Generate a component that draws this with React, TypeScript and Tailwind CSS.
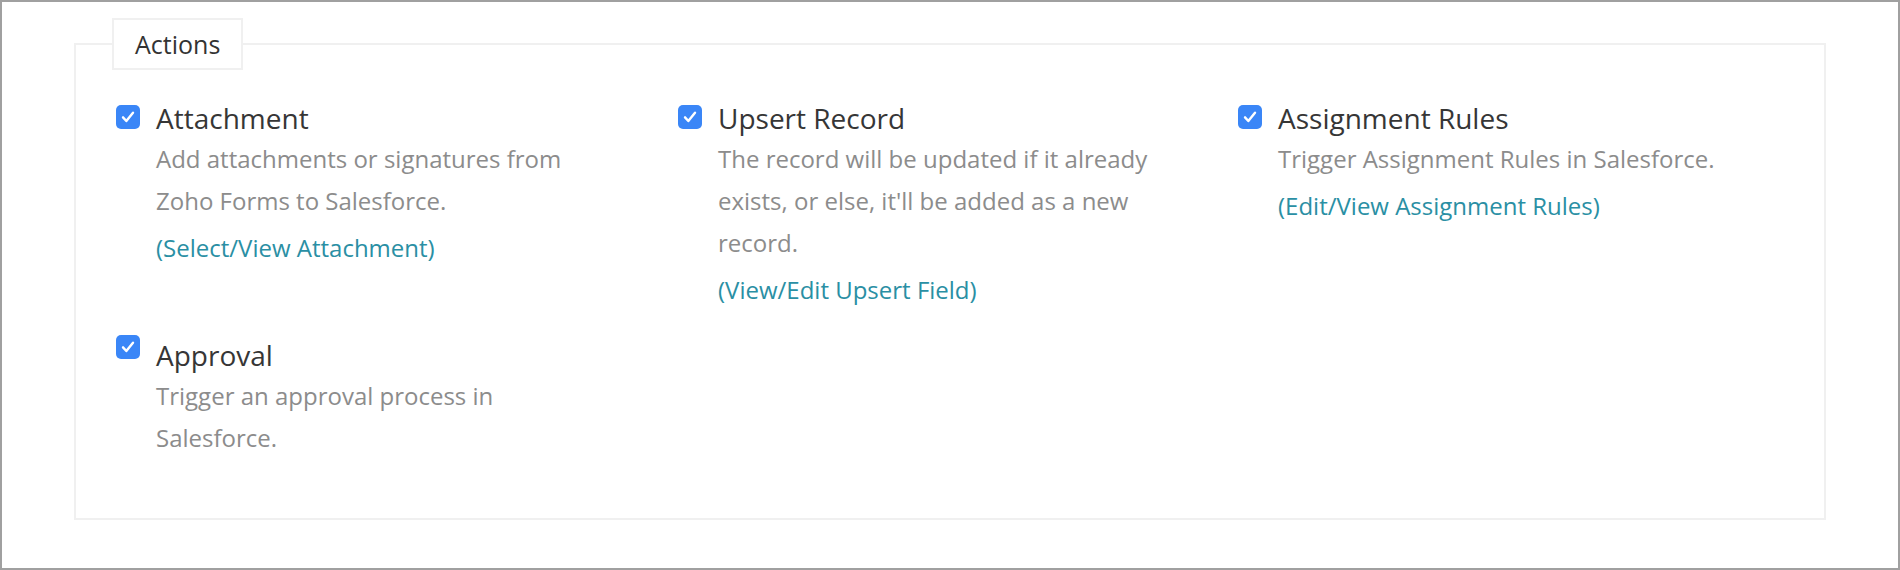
import React from 'react';

type Action = {
  title: string;
  desc: string;
  link?: string;
  boxTop: string;
};

const actions: Action[] = [
  {
    title: 'Attachment',
    desc: 'Add attachments or signatures from Zoho Forms to Salesforce.',
    link: '(Select/View Attachment)',
    boxTop: 'mt-[7px]',
  },
  {
    title: 'Upsert Record',
    desc: "The record will be updated if it already exists, or else, it'll be added as a new record.",
    link: '(View/Edit Upsert Field)',
    boxTop: 'mt-[7px]',
  },
  {
    title: 'Assignment Rules',
    desc: 'Trigger Assignment Rules in Salesforce.',
    link: '(Edit/View Assignment Rules)',
    boxTop: 'mt-[7px]',
  },
  {
    title: 'Approval',
    desc: 'Trigger an approval process in Salesforce.',
    boxTop: 'mt-0',
  },
];

function CheckBox({ className }: { className: string }) {
  return (
    <span className={`flex h-[24px] w-[24px] shrink-0 items-center justify-center rounded-[5px] bg-[#3a86f7] ${className}`}>
      <svg width="16" height="16" viewBox="0 0 24 24" fill="none" stroke="white" strokeWidth="3.6" strokeLinecap="round" strokeLinejoin="round">
        <path d="M4.5 12.5l5 5.5L19.5 5.5" />
      </svg>
    </span>
  );
}

export default function App() {
  return (
    <div className="h-[570px] w-full border-2 border-[#a0a0a0] bg-white font-['Open_Sans',sans-serif]">
      <fieldset className="ml-[72px] mt-[16px] h-[502px] w-[1752px] border-2 border-[#f0f0f0] pl-[36px] pt-[28px]">
        <legend className="h-[52px] border-2 border-[#f0f0f0] px-[21px] text-[25px] leading-[48px] text-[#333]">
          Actions
        </legend>

        <div className="grid grid-cols-[562px_560px_1fr] gap-y-[24px] pl-[4px]">
          {actions.map((a) => (
            <div key={a.title} className="flex items-start gap-[16px]">
              <CheckBox className={a.boxTop} />
              <div className="w-[440px]">
                <div className="text-[28px] leading-[40px] text-[#363636]">{a.title}</div>
                <p className="text-[24px] leading-[42px] text-[#8c8c8c]">{a.desc}</p>
                {a.link && (
                  <a href="#" className="mt-[5px] block text-[24px] leading-[42px] text-[#2a8fa4]">
                    {a.link}
                  </a>
                )}
              </div>
            </div>
          ))}
        </div>
      </fieldset>
    </div>
  );
}
